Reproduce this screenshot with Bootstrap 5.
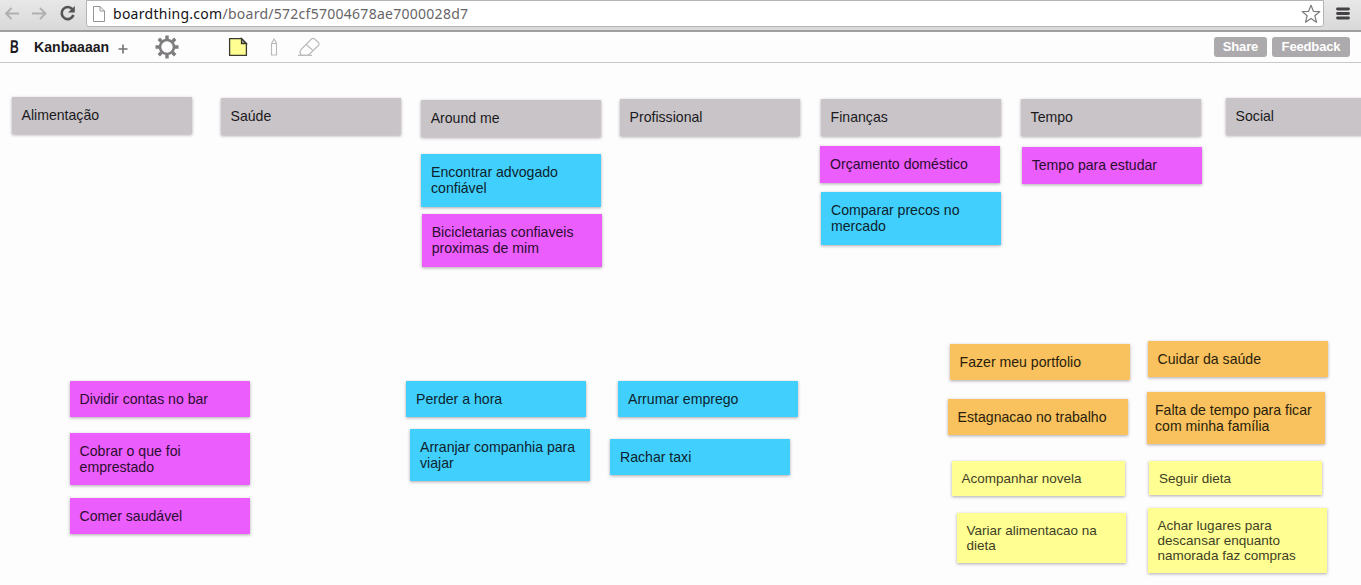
<!DOCTYPE html>
<html lang="pt">
<head>
<meta charset="utf-8">
<meta name="viewport" content="width=device-width, initial-scale=1">
<title>Kanbaaaan</title>
<link href="https://cdn.jsdelivr.net/npm/bootstrap@5.3.0/dist/css/bootstrap.min.css" rel="stylesheet">
<style>
body{font-family:"Liberation Sans",Arial,sans-serif;background:#fefdfe;color:#1c1a1c;height:585px}
svg{display:block;flex:none}
.chrome{height:32px;background:linear-gradient(#e9e8e9,#dad9da);border-bottom:2px solid #a09ea0;padding:0 11px 3px 4px}
.omni{height:27px;background:#fff;border:1px solid #b5b3b5;border-radius:0 0 3px 3px;padding:0 2px 0 6px;margin-left:6px;margin-right:8px}
.url{font:14px/20px "Noto Sans","Open Sans",sans-serif;color:#676567;letter-spacing:.27px;margin-left:8px}
.url span{color:#151315}
.tools{height:31px;background:#fefdfe;border-bottom:1px solid #c9c7c9;padding:0 11px 0 9px}
.logo{width:12px;font-size:18.5px;line-height:30px;font-weight:700;transform:scaleX(.66) skewX(-3deg);transform-origin:3px 50%}
.title{font-size:14.1px;margin-left:13px;line-height:32px}
.plus{margin-left:9px;margin-top:4px}
.gear{margin-left:27px}
.paper{margin-left:49px}
.pencil{margin-left:22px}
.eraser{margin-left:19px}
.tool-btn{--bs-btn-padding-x:0;--bs-btn-padding-y:0;--bs-btn-font-size:13px;--bs-btn-line-height:20px;--bs-btn-border-width:0;--bs-btn-border-radius:3px;--bs-btn-color:#fff;--bs-btn-bg:#acaaac;--bs-btn-font-weight:700;height:20px;letter-spacing:-.15px}
.board-actions{gap:5px}
.share{width:53px}.feedback{width:78px}
.board{height:522px}
.note{position:absolute;width:180.7px;padding:10px 8px 10.4px 10px;font-size:14.1px;line-height:16px;box-shadow:0 1px 3px rgba(60,50,60,.42)}
.grey{background:#c8c4c8}
.blue{background:#41d0fd;color:#0d232d}
.pink{background:#eb5dfc;color:#2b0d30}
.orange{background:#fac25e;color:#291e0b}
.yellow{background:#fffe93;color:#403e26;font-size:13.5px;line-height:15px;padding-bottom:9.6px}
/* note positions on the canvas */
#n1{left:11.5px;top:34.3px}#n2{left:220.5px;top:35.3px}#n3{left:420.7px;top:37.3px}#n4{left:619.6px;top:36.3px}#n5{left:820.6px;top:36.3px}#n6{left:1020.6px;top:36.3px}#n7{left:1225.6px;top:35.3px}
#n8{left:421px;top:91.3px;width:180px}#n9{left:421.7px;top:151.3px}#n10{left:820px;top:83.3px;width:180px}#n11{left:821px;top:129.3px;width:180px}#n12{left:1021.7px;top:84.3px;width:180px}
#n13{left:69.6px;top:317.7px}#n14{left:69.6px;top:369.7px}#n15{left:69.6px;top:434.6px}
#n16{left:406px;top:317.7px;width:180px}#n17{left:410px;top:365.7px;width:180px}#n18{left:618px;top:317.7px;width:180px}#n19{left:610px;top:375.7px;width:180px}
#n20{left:949.6px;top:280.7px}#n21{left:1147.6px;top:277.7px}#n22{left:947.6px;top:335.7px}#n23{left:1147px;top:328.6px;width:178px;padding-left:8px}
#n24{left:951.5px;top:398.3px;width:173.500px}#n25{left:1149px;top:397.6px;width:173px}#n26{left:956.5px;top:450.3px;width:169.500px}#n27{left:1147.600px;top:445.3px;width:179px}
</style>
</head>
<body class="overflow-hidden">
<header class="chrome d-flex align-items-center">
  <svg width="76" height="28" viewBox="0 0 76 28" fill="none"><path d="M15 13.5H2M7.500 8L2 13.500 7.500 19M28 13.500H41.500M36 8L41.500 13.500 36 19" stroke="#b1afb1" stroke-width="1.900"/><path d="M68.300 9.200A6 6 0 1 0 69.400 15" stroke="#555355" stroke-width="2.600"/><path d="M70.800 6V12.600H64z" fill="#555355"/></svg>
  <div class="omni d-flex align-items-center flex-grow-1">
    <svg width="12" height="16" viewBox="0 0 12 16" fill="#fff" stroke="#969496"><path d="M.5.5H7L11.500 5V15.500H.5zM7 .5V5H11.500"/></svg>
    <div class="url flex-grow-1 text-nowrap"><span>boardthing.com</span>/board/572cf57004678ae7000028d7</div>
    <svg width="20" height="20" viewBox="0 0 20 20" fill="#fff" stroke="#7b797b" stroke-width="1.200" stroke-linejoin="round"><path d="M10 1.200L12.400 7.300 18.800 7.600 13.800 11.700 15.500 18.200 10 14.500 4.500 18.200 6.200 11.700 1.200 7.600 7.600 7.300z"/></svg>
  </div>
  <svg class="ms-1" width="14" height="14" viewBox="0 0 14 14"><path d="M1.500 2H12.500M1.500 6.500H12.500M1.500 11H12.500" stroke="#444244" stroke-width="2.800" stroke-linecap="round"/></svg>
</header>
<nav class="tools d-flex align-items-center">
  <div class="logo">B</div>
  <div class="title fw-bold">Kanbaaaan</div>
  <svg class="plus" width="10" height="10" viewBox="0 0 10 10"><path d="M5 .5V9.500M.5 5H9.500" stroke="#737173" stroke-width="1.600"/></svg>
  <svg class="gear" width="24" height="24" viewBox="-12 -12 24 24" fill="none" stroke="#7e7c7e"><circle r="7" stroke-width="2.600"/><path d="M0-7.500V-11.500M0 7.500V11.500M-7.500 0H-11.500M7.500 0H11.500M5.300-5.300L8.200-8.200M-5.300-5.300L-8.200-8.200M5.300 5.300L8.200 8.200M-5.300 5.300L-8.200 8.200" stroke-width="3.400"/></svg>
  <svg class="paper" width="20" height="20" viewBox="0 0 20 20" stroke="#3b3a2e" stroke-width="1.300"><path d="M1.600 1.600H13.500L18.400 6.500V18.400H1.600z" fill="#fffe93"/><path d="M13.500 1.600V6.500H18.400z" fill="#aaa"/></svg>
  <svg class="pencil" width="8" height="18" viewBox="0 0 8 18" fill="none" stroke="#b9b7b9" stroke-width="1.100"><path d="M1.500 5.500L4 1 6.500 5.500V17H1.500zM1.500 5.500H6.500"/></svg>
  <svg class="eraser" width="24" height="20" viewBox="0 0 24 20" fill="none" stroke="#bdbbbd" stroke-width="1.200" stroke-linejoin="round"><path d="M4 12.500L14.500 2Q16 .8 17.500 2L21.500 5.500Q22.800 7 21.500 8.500L11.500 18H4Q2 15.500 4 12.500zM9 7.200L16 13.500M1 18.300H15"/></svg>
  <div class="d-flex ms-auto board-actions"><button class="btn tool-btn share">Share</button><button class="btn tool-btn feedback">Feedback</button></div>
</nav>
<main class="board position-relative overflow-hidden">
  <div class="note grey" id="n1">Alimentação</div>
  <div class="note grey" id="n2">Saúde</div>
  <div class="note grey" id="n3">Around me</div>
  <div class="note grey" id="n4">Profissional</div>
  <div class="note grey" id="n5">Finanças</div>
  <div class="note grey" id="n6">Tempo</div>
  <div class="note grey" id="n7">Social</div>
  <div class="note blue" id="n8">Encontrar advogado<br>confiável</div>
  <div class="note pink" id="n9">Bicicletarias confiaveis<br>proximas de mim</div>
  <div class="note pink" id="n10">Orçamento doméstico</div>
  <div class="note blue" id="n11">Comparar precos no<br>mercado</div>
  <div class="note pink" id="n12">Tempo para estudar</div>
  <div class="note pink" id="n13">Dividir contas no bar</div>
  <div class="note pink" id="n14">Cobrar o que foi<br>emprestado</div>
  <div class="note pink" id="n15">Comer saudável</div>
  <div class="note blue" id="n16">Perder a hora</div>
  <div class="note blue" id="n17">Arranjar companhia para<br>viajar</div>
  <div class="note blue" id="n18">Arrumar emprego</div>
  <div class="note blue" id="n19">Rachar taxi</div>
  <div class="note orange" id="n20">Fazer meu portfolio</div>
  <div class="note orange" id="n21">Cuidar da saúde</div>
  <div class="note orange" id="n22">Estagnacao no trabalho</div>
  <div class="note orange" id="n23">Falta de tempo para ficar<br>com minha família</div>
  <div class="note yellow" id="n24">Acompanhar novela</div>
  <div class="note yellow" id="n25">Seguir dieta</div>
  <div class="note yellow" id="n26">Variar alimentacao na<br>dieta</div>
  <div class="note yellow" id="n27">Achar lugares para<br>descansar enquanto<br>namorada faz compras</div>
</main>
<script src="https://cdn.jsdelivr.net/npm/bootstrap@5.3.0/dist/js/bootstrap.bundle.min.js"></script>
</body>
</html>
